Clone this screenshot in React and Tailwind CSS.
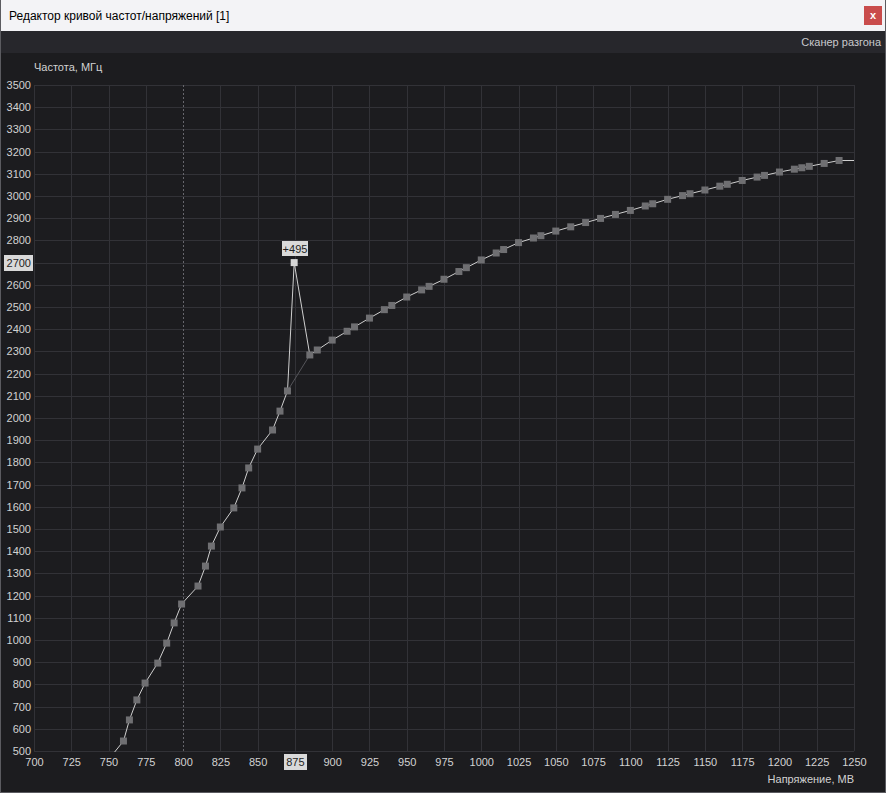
import React from 'react';

const W = 886;
const H = 740;
const L = 33;
const R = 853;
const T = 32;
const B = 698;

const X = (mv) => L + ((mv - 700) * (R - L)) / 550;
const Y = (mhz) => T + ((3500 - mhz) * (B - T)) / 3000;

// lower part of the curve, read off the screenshot
const lower = [
    [760, 545], [764, 640], [769, 730], [774.5, 806], [783, 896], [789, 986],
    [794, 1077], [799, 1162], [810, 1243], [815, 1333], [819, 1423], [825, 1509],
    [834, 1595], [839.5, 1685], [844, 1775], [850, 1860], [860, 1946], [865, 2031],
    [870, 2122],
];
const peak = [874.5, 2700];

const anchors = [
    [885, 2284], [900, 2351], [925, 2450], [950, 2545], [975, 2625], [1000, 2712],
    [1025, 2790], [1050, 2842], [1075, 2890], [1100, 2935], [1125, 2985],
    [1150, 3027], [1175, 3070], [1200, 3108], [1225, 3140], [1240, 3160],
];
const interp = (mv) => {
    for (let i = 0; i < anchors.length - 1; i++) {
        const [a, fa] = anchors[i];
        const [b, fb] = anchors[i + 1];
        if (mv >= a && mv <= b) return fa + ((fb - fa) * (mv - a)) / (b - a);
    }
    return anchors[anchors.length - 1][1];
};
const upperMv = [
    885, 890, 900, 910, 915, 925, 935, 940, 950, 960, 965, 975, 985, 990, 1000,
    1010, 1015, 1025, 1035, 1040, 1050, 1060, 1070, 1080, 1090, 1100, 1110, 1115,
    1125, 1135, 1140, 1150, 1160, 1165, 1175, 1185, 1190, 1200, 1210, 1215, 1220,
    1230, 1240,
];
const upper = upperMv.map((mv) => [mv, interp(mv)]);

const xTicks = Array.from({ length: 23 }, (_, i) => 700 + i * 25);
const yTicks = Array.from({ length: 31 }, (_, i) => 500 + i * 100);

const FONT = '"Liberation Sans", Arial, sans-serif';

const CurveChart = () => {
    const line = [[740, 378], ...lower, peak, ...upper, [1250, 3160]]
        .map(([mv, f]) => `${X(mv).toFixed(1)},${Y(f).toFixed(1)}`)
        .join(' ');

    return (
        <svg width={W - 2} height={H - 1} className="block" style={{ fontFamily: FONT }}>
            <defs>
                <clipPath id="plot">
                    <rect x={L} y={T} width={R - L + 1} height={B - T + 1} />
                </clipPath>
            </defs>

            {/* сетка */}
            {yTicks.map((f) => (
                <line key={f} x1={L} x2={R} y1={Math.round(Y(f)) + 0.5} y2={Math.round(Y(f)) + 0.5} stroke="#323237" strokeWidth="1" />
            ))}
            {xTicks.map((mv) => (
                <line key={mv} x1={Math.round(X(mv)) + 0.5} x2={Math.round(X(mv)) + 0.5} y1={T} y2={B} stroke={mv === 800 ? 'none' : '#323237'} strokeWidth="1" />
            ))}
            <line x1={Math.round(X(800)) + 0.5} x2={Math.round(X(800)) + 0.5} y1={T} y2={B} stroke="#66666c" strokeWidth="1" strokeDasharray="2 2" />

            <g clipPath="url(#plot)">
                {/* исходная кривая под пиком */}
                <line x1={X(870)} y1={Y(2122)} x2={X(885)} y2={Y(2284)} stroke="#55555a" strokeWidth="1" />
                <polyline points={line} fill="none" stroke="#cfcfcf" strokeWidth="1" />
                {[...lower, ...upper].map(([mv, f], i) => (
                    <rect key={i} x={X(mv) - 3.5} y={Y(f) - 3.5} width="7" height="7" fill="#6f6f72" />
                ))}
                <rect x={X(peak[0]) - 3.5} y={Y(peak[1]) - 3.5} width="7" height="7" fill="#d6d6d6" />
            </g>

            {/* подпись смещения */}
            <rect x="281" y="188" width="26" height="15" fill="#d9d9d9" />
            <text x="294" y="199.5" textAnchor="middle" fontSize="11" fill="#1e1e1e">+495</text>

            {/* ось Y */}
            <text x={L} y="18" fontSize="11" fill="#d2d2d2">Частота, МГц</text>
            <rect x="3" y={Math.round(Y(2700)) - 8} width="29" height="16" fill="#d9d9d9" />
            {yTicks.map((f) => (
                <text key={f} x="30" y={Y(f) + 4} textAnchor="end" fontSize="11" fill={f === 2700 ? '#1e1e1e' : '#d2d2d2'}>
                    {f}
                </text>
            ))}

            {/* ось X */}
            <rect x={Math.round(X(875)) - 11} y="701" width="23" height="16" fill="#d9d9d9" />
            {xTicks.map((mv) => (
                <text key={mv} x={X(mv) + 0.5} y="713" textAnchor="middle" fontSize="11" fill={mv === 875 ? '#1e1e1e' : '#d2d2d2'}>
                    {mv}
                </text>
            ))}
            <text x={R} y="730" textAnchor="end" fontSize="11" fill="#d2d2d2">Напряжение, МВ</text>
        </svg>
    );
};

export default function App() {
    return (
        <div className="w-[886px] h-[793px] flex flex-col bg-[#1c1c1f] border-x border-b border-[#5b5b60] overflow-hidden" style={{ fontFamily: FONT }}>
            <div className="h-[31px] shrink-0 flex items-center justify-between bg-[#f3f3f6] pl-[8px] pr-[3px]">
                <span className="text-[12px] text-black">Редактор кривой частот/напряжений [1]</span>
                <button className="w-[18px] h-[19px] bg-[#c94c4c] text-white text-[11px] font-bold leading-none flex items-center justify-center">
                    x
                </button>
            </div>
            <div className="h-[22px] shrink-0 flex items-center justify-end bg-[#27272c] pr-[4px]">
                <span className="text-[11px] text-[#c9c9cc]">Сканер разгона</span>
            </div>
            <CurveChart />
        </div>
    );
}
